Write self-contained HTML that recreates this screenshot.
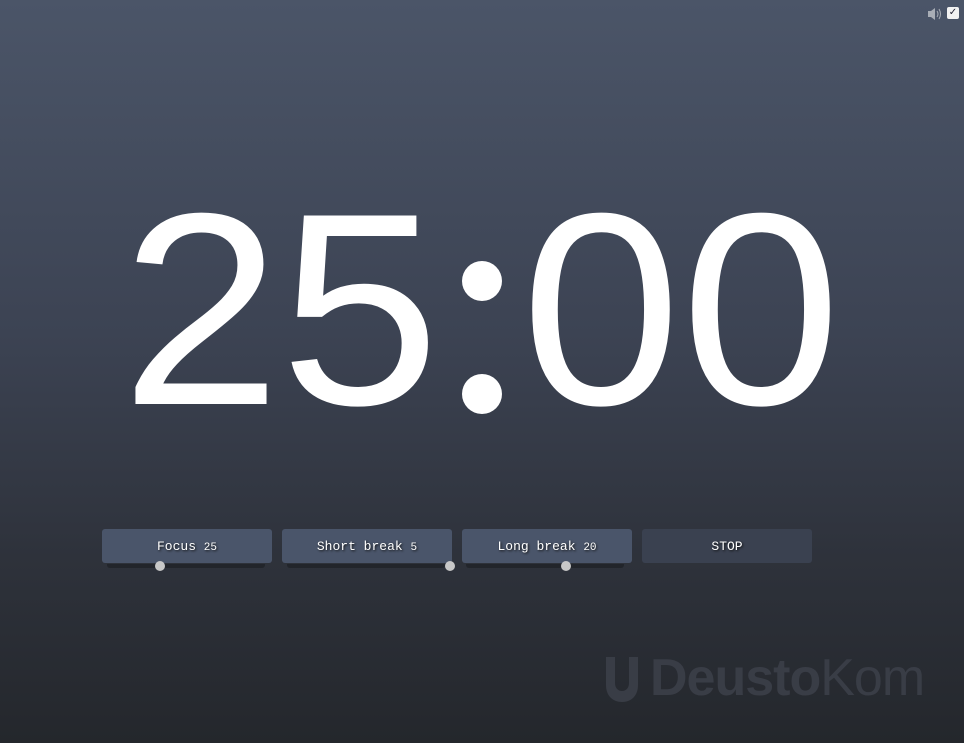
<!DOCTYPE html>
<html><head><meta charset="utf-8"><style>
html,body{margin:0;padding:0}
body{width:964px;height:743px;overflow:hidden;position:relative;background:linear-gradient(#4b5568 0%,#3c4353 45%,#2e323b 75%,#24272c 100%);font-family:"Liberation Sans",sans-serif}
.d{position:absolute;top:173px;width:160px;text-align:center;color:#fff;font-size:274px;line-height:274px;transform:scaleX(1.05)}
.dot{position:absolute;left:462px;width:40px;height:40px;border-radius:50%;background:#fff}
.btn{position:absolute;top:529px;width:170px;height:34px;border-radius:3px;background:#4a556a;color:#fff;font-family:"Liberation Mono",monospace;font-size:13px;line-height:36px;text-align:center;text-shadow:1px 1px 2px #111}
.btn small{font-size:11px}
.track{position:absolute;top:564px;width:158px;height:4px;background:#22252b;border-radius:0 0 3px 3px}
.thumb{position:absolute;top:561px;width:10px;height:10px;border-radius:50%;background:#c8c8c8}
.logo{position:absolute;left:650px;top:648px;font-size:52px;color:#393d46;letter-spacing:-1px;line-height:60px}
</style></head><body>
<div class="d" style="left:121px">2</div>
<div class="d" style="left:280px">5</div>
<div class="dot" style="top:261px"></div>
<div class="dot" style="top:374px"></div>
<div class="d" style="left:521px">0</div>
<div class="d" style="left:681px">0</div>
<div class="btn" style="left:102px">Focus <small>25</small></div>
<div class="btn" style="left:282px">Short break <small>5</small></div>
<div class="btn" style="left:462px">Long break <small>20</small></div>
<div class="btn" style="left:642px;background:#3a4150">STOP</div>
<div class="track" style="left:107px"></div>
<div class="track" style="left:287px"></div>
<div class="track" style="left:466px"></div>
<div class="thumb" style="left:155px"></div>
<div class="thumb" style="left:445px"></div>
<div class="thumb" style="left:561px"></div>
<svg style="position:absolute;left:606px;top:657px" width="32" height="46"><path d="M0 0H9V26C9 31 12 34 16 34C20 34 23 31 23 26V0H32V28C32 39 25 45 16 45C7 45 0 39 0 28Z" fill="#393d46"/></svg>
<div class="logo"><b>Deusto</b>Kom</div>
<svg style="position:absolute;left:927px;top:7px" width="16" height="14"><path d="M1 4H4L8 1V13L4 10H1Z" fill="#a8adb5"/><path d="M10 4Q12 7 10 10M12 2Q15 7 12 12" stroke="#a8adb5" fill="none"/></svg>
<div style="position:absolute;left:947px;top:7px;width:12px;height:12px;background:#f2f2f2;border-radius:2px;font-size:10px;line-height:12px;text-align:center;color:#223">✓</div>
</body></html>
